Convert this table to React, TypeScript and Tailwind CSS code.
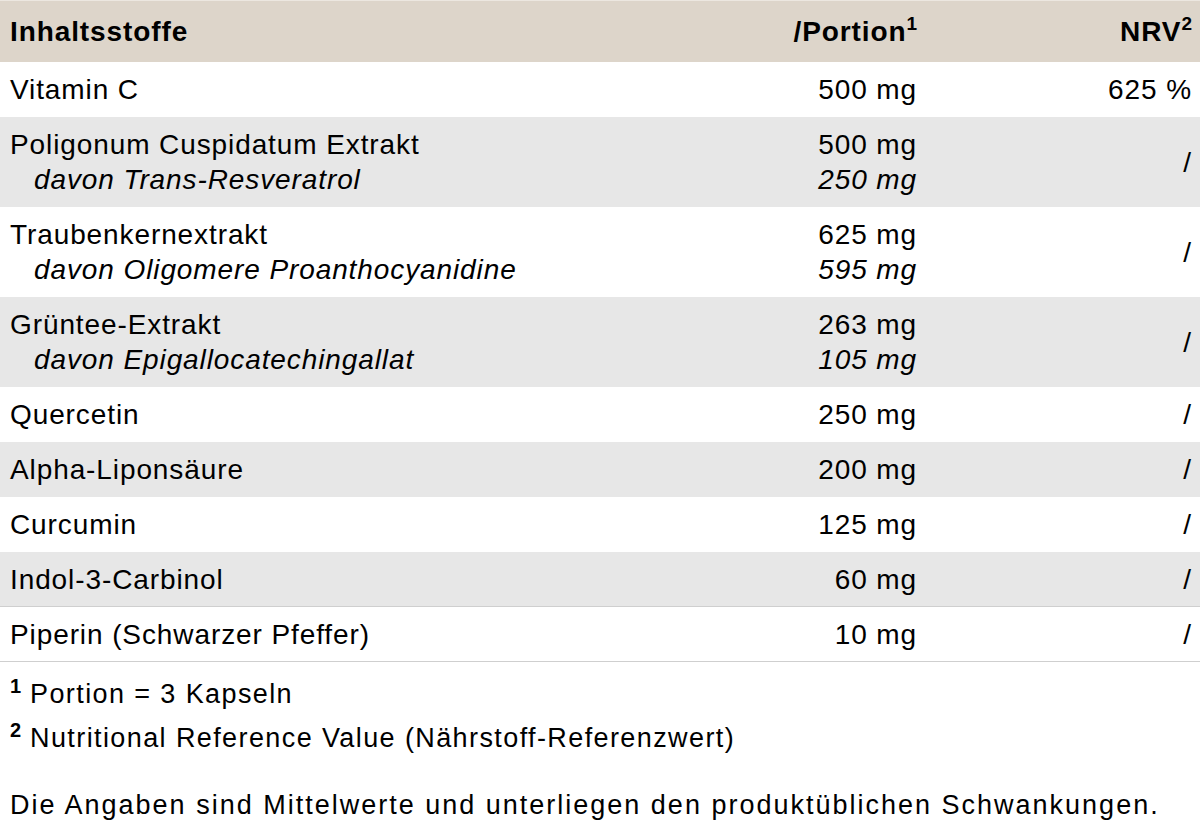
type Row = {
  name: string;
  amount: string;
  nrv: string;
  subName?: string;
  subAmount?: string;
};

const rows: Row[] = [
  { name: "Vitamin C", amount: "500 mg", nrv: "625 %" },
  {
    name: "Poligonum Cuspidatum Extrakt",
    amount: "500 mg",
    nrv: "/",
    subName: "davon Trans-Resveratrol",
    subAmount: "250 mg",
  },
  {
    name: "Traubenkernextrakt",
    amount: "625 mg",
    nrv: "/",
    subName: "davon Oligomere Proanthocyanidine",
    subAmount: "595 mg",
  },
  {
    name: "Grüntee-Extrakt",
    amount: "263 mg",
    nrv: "/",
    subName: "davon Epigallocatechingallat",
    subAmount: "105 mg",
  },
  { name: "Quercetin", amount: "250 mg", nrv: "/" },
  { name: "Alpha-Liponsäure", amount: "200 mg", nrv: "/" },
  { name: "Curcumin", amount: "125 mg", nrv: "/" },
  { name: "Indol-3-Carbinol", amount: "60 mg", nrv: "/" },
  { name: "Piperin (Schwarzer Pfeffer)", amount: "10 mg", nrv: "/" },
];

export default function App() {
  return (
    <div className="w-[1200px] h-[830px] overflow-hidden bg-white text-black font-['Liberation_Sans',Arial,sans-serif]">
      <div className="text-[28px] tracking-[0.9px] leading-[35px]">
        <div className="flex h-[62px] items-center border-t border-[#ece7e0] bg-[#ddd5ca] font-bold">
          <div className="flex-1 pl-[10px]">Inhaltsstoffe</div>
          <div className="w-[300px] text-right">
            /Portion<sup className="relative -top-[11px] text-[19px] tracking-normal">1</sup>
          </div>
          <div className="w-[283px] pr-[8px] text-right">
            NRV<sup className="relative -top-[11px] text-[19px] tracking-normal">2</sup>
          </div>
        </div>

        {rows.map((row, i) => (
          <div
            key={row.name}
            className={`flex items-center ${i % 2 === 1 ? "bg-[#e7e7e7]" : "bg-white"} ${i >= 7 ? "border-b border-[#cfcfcf] py-[9.5px]" : "py-[10px]"}`}
          >
            <div className="flex-1 pl-[10px]">
              <div>{row.name}</div>
              {row.subName && <div className="pl-[24px] italic">{row.subName}</div>}
            </div>
            <div className="w-[300px] text-right">
              <div>{row.amount}</div>
              {row.subAmount && <div className="italic">{row.subAmount}</div>}
            </div>
            <div className="w-[283px] pr-[8px] text-right">{row.nrv}</div>
          </div>
        ))}
      </div>

      <div className="pl-[10px] pt-[10px] text-[27px] tracking-[1.4px] leading-[44px]">
        <div>
          <sup className="relative -top-[10px] text-[20px] font-bold tracking-normal">1</sup> Portion = 3 Kapseln
        </div>
        <div>
          <sup className="relative -top-[10px] text-[20px] font-bold tracking-normal">2</sup> Nutritional Reference
          Value (Nährstoff-Referenzwert)
        </div>
        <div className="mt-[23px] tracking-[2px]">
          Die Angaben sind Mittelwerte und unterliegen den produktüblichen Schwankungen.
        </div>
      </div>
    </div>
  );
}
